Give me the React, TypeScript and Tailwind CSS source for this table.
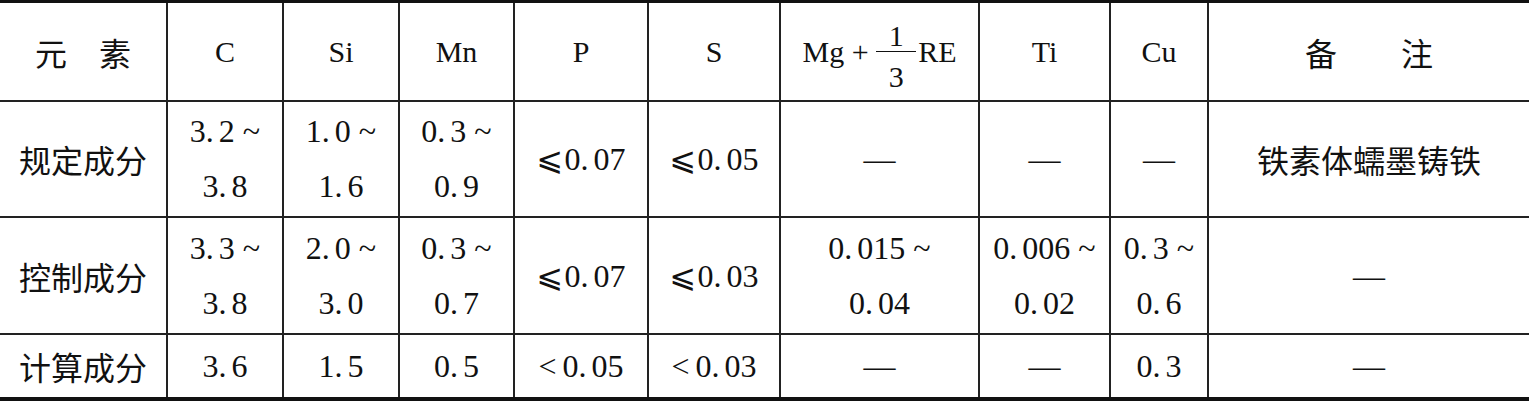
const SERIF = "font-['Liberation_Serif','Noto_Sans_CJK_SC',serif]";
const CJK = "font-['Noto_Sans_CJK_SC',sans-serif] text-[32px] leading-[40px]";

const COL_W = [
  "w-[166px]",
  "w-[116px] border-l-2",
  "w-[116px] border-l-2",
  "w-[115px] border-l-2",
  "w-[134px] border-l-2",
  "w-[132px] border-l-2",
  "w-[199px] border-l-2",
  "w-[131px] border-l-2",
  "w-[98px] border-l-2",
  "w-[322px] border-l-2",
];

type CellValue = string | string[] | { cjk: string } | "frac";

const HEADER: CellValue[] = [
  { cjk: "元　素" },
  "C",
  "Si",
  "Mn",
  "P",
  "S",
  "frac",
  "Ti",
  "Cu",
  { cjk: "备　　注" },
];

const ROWS: { h: string; cells: CellValue[] }[] = [
  {
    h: "h-[116px]",
    cells: [
      { cjk: "规定成分" },
      ["3.2 ~", "3.8"],
      ["1.0 ~", "1.6"],
      ["0.3 ~", "0.9"],
      "⩽0.07",
      "⩽0.05",
      "—",
      "—",
      "—",
      { cjk: "铁素体蠕墨铸铁" },
    ],
  },
  {
    h: "h-[117px]",
    cells: [
      { cjk: "控制成分" },
      ["3.3 ~", "3.8"],
      ["2.0 ~", "3.0"],
      ["0.3 ~", "0.7"],
      "⩽0.07",
      "⩽0.03",
      ["0.015 ~", "0.04"],
      ["0.006 ~", "0.02"],
      ["0.3 ~", "0.6"],
      "—",
    ],
  },
  {
    h: "h-[62px]",
    cells: [
      { cjk: "计算成分" },
      "3.6",
      "1.5",
      "0.5",
      "<0.05",
      "<0.03",
      "—",
      "—",
      "0.3",
      "—",
    ],
  },
];

// decimal point and relation signs are set wider, as in the printed table
function Num({ text }: { text: string }) {
  const out: React.ReactNode[] = [];
  let run = "";
  const flush = () => {
    if (run) out.push(run);
    run = "";
  };
  text.split("").forEach((ch, i) => {
    if (ch === ".") {
      flush();
      out.push(
        <span key={i} className="mr-[5px]">
          .
        </span>
      );
    } else if (ch === "⩽") {
      flush();
      out.push(
        <span key={i} className="inline-block w-[28px] font-['DejaVu_Sans',sans-serif] text-[32px]">
          ⩽
        </span>
      );
    } else if (ch === "<") {
      flush();
      out.push(
        <span key={i} className="inline-block w-[24px]">
          &lt;
        </span>
      );
    } else {
      run += ch;
    }
  });
  flush();
  return <span className="whitespace-pre">{out}</span>;
}

function Fraction() {
  return (
    <div className={`flex items-center text-[30px] leading-[30px] ${SERIF}`}>
      <span className="whitespace-pre">Mg + </span>
      <div className="flex flex-col items-center">
        <div className="flex h-[36px] items-end">1</div>
        <div className="h-[1.5px] w-[40px] bg-[#111]" />
        <div className="h-[36px] pt-[10px]">3</div>
      </div>
      <span className="ml-[2px]">RE</span>
    </div>
  );
}

function Cell({ value, col, head }: { value: CellValue; col: number; head?: boolean }) {
  let body: React.ReactNode;
  if (value === "frac") {
    body = <Fraction />;
  } else if (typeof value === "object" && !Array.isArray(value)) {
    body = <span className={`${CJK} whitespace-pre`}>{value.cjk}</span>;
  } else if (Array.isArray(value)) {
    body = (
      <div className={`flex flex-col items-center text-[32px] leading-[55px] ${SERIF}`}>
        {value.map((line) => (
          <Num key={line} text={line} />
        ))}
      </div>
    );
  } else {
    body = (
      <span className={`${head ? "text-[30px]" : "text-[32px]"} leading-[32px] ${SERIF}`}>
        <Num text={value} />
      </span>
    );
  }
  return (
    <div className={`flex h-full shrink-0 items-center justify-center border-[#222] ${COL_W[col]}`}>
      {body}
    </div>
  );
}

export default function App() {
  return (
    <div className="min-h-[401px] bg-white text-[#111]">
      <div className="w-[1529px] border-t-[3px] border-b-4 border-[#111]">
        <div className="flex h-[99px] border-b-2 border-[#222]">
          {HEADER.map((v, i) => (
            <Cell key={i} value={v} col={i} head />
          ))}
        </div>
        {ROWS.map((row, r) => (
          <div
            key={r}
            className={`flex ${row.h} ${r < ROWS.length - 1 ? "border-b-2 border-[#222]" : ""}`}
          >
            {row.cells.map((v, i) => (
              <Cell key={i} value={v} col={i} />
            ))}
          </div>
        ))}
      </div>
    </div>
  );
}
